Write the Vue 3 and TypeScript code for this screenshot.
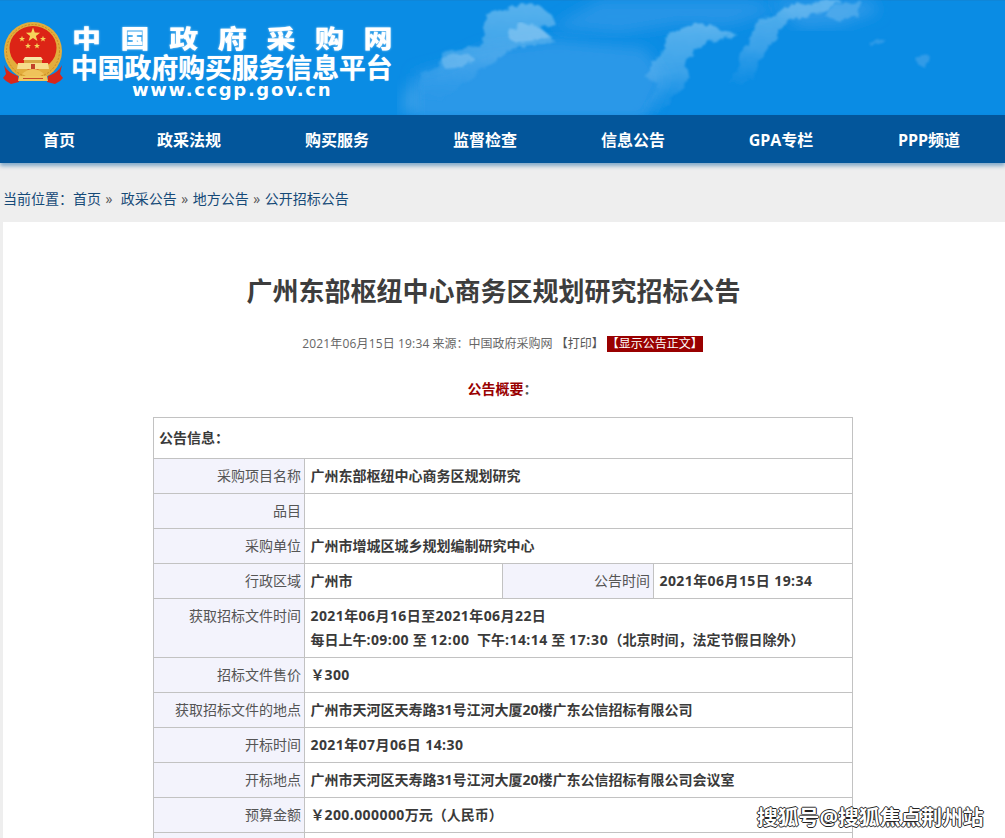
<script setup lang="ts">
const navItems = ['首页', '政采法规', '购买服务', '监督检查', '信息公告', 'GPA专栏', 'PPP频道']
const stars = [
  { x: 33, y: 20, r: 7.5 },
  { x: 22, y: 24, r: 3.2 },
  { x: 28, y: 31, r: 3.2 },
  { x: 37, y: 31, r: 3.2 },
  { x: 43, y: 24, r: 3.2 },
]
const starPoints = (cx: number, cy: number, r: number) => {
  const pts: string[] = []
  for (let i = 0; i < 10; i++) {
    const rad = i % 2 === 0 ? r : r * 0.4
    const a = -Math.PI / 2 + (i * Math.PI) / 5
    pts.push(`${(cx + rad * Math.cos(a)).toFixed(1)},${(cy + rad * Math.sin(a)).toFixed(1)}`)
  }
  return pts.join(' ')
}
</script>

<template>
  <div class="page">
    <header class="banner">
      <div class="logo">
        <svg class="emblem" viewBox="0 0 70 72" width="70" height="72">
          <circle cx="33" cy="36" r="29" fill="#e2ad3c" />
          <circle cx="33" cy="36" r="26.5" fill="none" stroke="#c78a22" stroke-width="1" stroke-dasharray="2 1.5" />
          <ellipse cx="33" cy="33" rx="23.5" ry="22" fill="#dc2416" />
          <polygon v-for="s in stars" :key="s.x" :points="starPoints(s.x, s.y, s.r)" fill="#f6d45a" />
          <path d="M25 42l-2 3h20l-2-3z" fill="#f8e7a8" />
          <path d="M24 45h18v3h-18z" fill="#d9a743" />
          <path d="M18 48h30l1 6h-32z" fill="#f6dd8c" />
          <rect x="31" y="49" width="4" height="5" fill="#c2402a" />
          <path d="M4 50c3 6 8 9 14 11l1 6-8 2-5-3-3-3 3-4z" fill="#d8261a" />
          <path d="M62 50c-3 6-8 9-14 11l-1 6 8 2 5-3 3-3-3-4z" fill="#d8261a" />
          <path d="M22 59c3-3 7-5 11-5s8 2 11 5l-4 2h-14z" fill="#efc35a" />
          <path d="M19 61h28l1 5h-30z" fill="#f0c85e" />
          <path d="M23 63.5h20" stroke="#c8492a" stroke-width="1" />
        </svg>
        <div class="logo-text">
          <div class="logo-main">中国政府采购网</div>
          <div class="logo-sub">中国政府购买服务信息平台</div>
          <div class="logo-url">www.ccgp.gov.cn</div>
        </div>
      </div>
      <svg class="clouds" viewBox="0 0 585 115" width="585" height="115">
        <defs>
          <filter id="soft" x="-10%" y="-10%" width="120%" height="120%">
            <feTurbulence type="fractalNoise" baseFrequency="0.11" numOctaves="3" seed="7" />
            <feDisplacementMap in="SourceGraphic" scale="7" />
            <feGaussianBlur stdDeviation="1.1" />
          </filter>
          <filter id="wide"><feGaussianBlur stdDeviation="7" /></filter>
          <linearGradient id="fade" x1="0" y1="0" x2="0" y2="1">
            <stop offset="0" stop-color="#8ccbf3" stop-opacity="0.6" />
            <stop offset="0.55" stop-color="#63b4ee" stop-opacity="0.55" />
            <stop offset="1" stop-color="#2c98e8" stop-opacity="0.15" />
          </linearGradient>
        </defs>
        <!-- 云层底色 -->
        <path d="M-5 120V74l30-8 40-18 70-8 90 8 20 30-20 42z" fill="#2b98e8" filter="url(#wide)" />
        <path d="M130 28l50-28h150l30 10-50 16-50-2-60 10z" fill="#2595e7" filter="url(#wide)" />
        <path d="M350 0h100l10 12-40 14-40 2z" fill="#2c98e8" filter="url(#wide)" />
        <path d="M-20 115l4-25 12-10 6 30z" fill="#4ea8ea" opacity="0.6" filter="url(#wide)" />
        <!-- 云峰 -->
        <path d="M0 100V73l14-2 8-11-2-8 20-3 7-3 13 1 5-12-2-10 7-11 15-4 15-7 18 2 14 10 4 10-16 2 10 11 7 5-37 3-10 4-15 12-15 10-40 28z" fill="url(#fade)" filter="url(#soft)" />
        <path d="M88 38l2-8 12-6 16 3 14 10-20 4-16 1z" fill="#a8d6f6" opacity="0.45" filter="url(#soft)" />
        <path d="M24 68l-2-10 14-4 12 0 8 6-14 6z" fill="#a8d6f6" opacity="0.35" filter="url(#soft)" />
        <path d="M222 112l10-17 8-10-14-7 6-16 12-12 1-12 13-8 12-5 20-1 10 6 18 5-33 7-5 8-15 10 3 15-6 15-12 10-8 12z" fill="url(#fade)" filter="url(#soft)" />
        <path d="M308 85l12-20-2-10 10-10 2-15 15-12 10-3 10-8 20-2 23-5h12l-10 10-15 5-25 5-10 10-10 15-10 15-7 20z" fill="url(#fade)" filter="url(#soft)" />
        <path d="M405 16l14-14h24l-6 14-18 5z" fill="#6db9ef" opacity="0.5" filter="url(#soft)" />
        <path d="M448 42l18-3-4 3-12 3z M495 58l14-3-3 14-8-4z" fill="#4ba6ea" opacity="0.6" filter="url(#soft)" />
      </svg>
    </header>

    <nav class="nav">
      <a v-for="item in navItems" :key="item" class="nav-item">{{ item }}</a>
    </nav>

    <div class="crumb">
      当前位置：首页 <span class="gt">»</span>&nbsp; 政采公告 <span class="gt">»</span> 地方公告 <span class="gt">»</span> 公开招标公告
    </div>

    <main class="card">
      <h2 class="title">广州东部枢纽中心商务区规划研究招标公告</h2>
      <p class="meta">
        <span class="date">2021年06月15日 19:34</span> 来源：中国政府采购网 <span class="print">【打印】</span>
        <span class="show">【显示公告正文】</span>
      </p>
      <p class="summary"><b>公告概要</b><i>：</i></p>

      <table class="info">
        <colgroup>
          <col class="c1" />
          <col class="c2" />
          <col class="c3" />
          <col class="c4" />
        </colgroup>
        <tbody>
          <tr class="head"><td colspan="4">公告信息：</td></tr>
          <tr><th>采购项目名称</th><td colspan="3">广州东部枢纽中心商务区规划研究</td></tr>
          <tr><th>品目</th><td colspan="3"></td></tr>
          <tr><th>采购单位</th><td colspan="3">广州市增城区城乡规划编制研究中心</td></tr>
          <tr><th>行政区域</th><td>广州市</td><th>公告时间</th><td class="num">2021年06月15日 19:34</td></tr>
          <tr class="tall">
            <th>获取招标文件时间</th>
            <td colspan="3"><span class="num">2021年06月16日至2021年06月22日</span><br />每日上午<span class="num">:09:00</span> 至 <span class="wide">12:00</span>&nbsp; 下午<span class="num">:14:14</span> 至 <span class="wide">17:30</span>（北京时间，法定节假日除外）</td>
          </tr>
          <tr><th>招标文件售价</th><td colspan="3">￥<span class="num">300</span></td></tr>
          <tr><th>获取招标文件的地点</th><td colspan="3">广州市天河区天寿路31号江河大厦20楼广东公信招标有限公司</td></tr>
          <tr><th>开标时间</th><td colspan="3" class="num">2021年07月06日 14:30</td></tr>
          <tr><th>开标地点</th><td colspan="3">广州市天河区天寿路31号江河大厦20楼广东公信招标有限公司会议室</td></tr>
          <tr><th>预算金额</th><td colspan="3">￥<span class="num">200.000000</span>万元（人民币）</td></tr>
          <tr><th></th><td colspan="3"></td></tr>
        </tbody>
      </table>
    </main>

    <div class="watermark">搜狐号@搜狐焦点荆州站</div>
  </div>
</template>

<style>
html,
body {
  margin: 0;
  background: #eeeeee;
  overflow: hidden;
}
</style>

<style scoped>
.page {
  position: relative;
  width: 1005px;
  height: 838px;
  overflow: hidden;
  background: #eeeeee;
  font-family: "Open Sans", "Liberation Sans", "Noto Sans CJK SC", sans-serif;
  color: #333;
}
/* 顶部 */
.banner {
  position: relative;
  height: 115px;
  display: flex;
  justify-content: space-between;
  background: #0a8ce4;
  border-top: 1px solid #0f86d8;
  box-sizing: border-box;
}
.logo {
  display: flex;
  align-items: flex-start;
  padding-top: 14px;
}
.logo-text {
  width: 320px;
  margin-left: 2px;
  margin-top: 7px;
  color: #fff;
  font-family: "Noto Sans CJK SC", sans-serif;
  font-weight: 900;
  white-space: nowrap;
}
.logo-main {
  font-size: 25px;
  line-height: 31px;
  letter-spacing: 16.9px;
  transform: scaleX(1.16);
  transform-origin: left center;
  text-shadow: 0 0 2px #bfe3fb;
}
.logo-sub {
  font-size: 26.8px;
  line-height: 28px;
  font-weight: 700;
  margin-left: -1px;
  text-shadow: 0 0 1px #bfe3fb;
}
.logo-url {
  font-family: "DejaVu Sans", sans-serif;
  font-weight: 700;
  font-size: 18px;
  line-height: 24px;
  letter-spacing: 1.65px;
  margin-left: 60px;
  margin-top: -3px;
}
.clouds {
  display: block;
  margin-top: -1px;
  overflow: visible;
}
/* 导航 */
.nav {
  height: 48px;
  display: flex;
  background: #03569b;
  box-shadow: 0 3px 4px rgba(3, 86, 155, 0.45);
  position: relative;
}
.nav-item {
  flex: none;
  width: 148px;
  text-align: center;
  color: #fff;
  font-size: 16px;
  font-weight: 700;
  line-height: 50px;
}
.nav-item:first-child {
  width: 115px;
  padding-left: 3px;
  box-sizing: border-box;
}
/* 面包屑 */
.crumb {
  height: 59px;
  box-sizing: border-box;
  padding: 26px 0 0 3px;
  font-size: 14px;
  line-height: 19px;
  color: #164a78;
}
.gt {
  color: #555;
  margin: 0 0.9px;
}
/* 内容 */
.card {
  margin-left: 3px;
  background: #fff;
  height: 640px;
  padding-top: 52px;
  box-sizing: border-box;
}
.title {
  margin: 0;
  text-align: center;
  font-size: 26px;
  line-height: 34px;
  font-weight: 700;
  color: #3d3d3d;
  padding-right: 21px;
}
.meta {
  margin: 28px 0 0;
  text-align: center;
  font-size: 12px;
  line-height: 16px;
  color: #666;
  padding-right: 3px;
}
.date {
  letter-spacing: 0.15px;
}
.print {
  color: #555;
}
.show {
  display: inline-block;
  background: #990000;
  color: #fff;
  margin-left: 3px;
  line-height: 16px;
}
.summary {
  margin: 27px 0 0;
  text-align: center;
  font-size: 14px;
  line-height: 20px;
  padding-right: 3px;
}
.summary b {
  color: #990000;
}
.summary i {
  font-style: normal;
  font-weight: 700;
  color: #555;
}
.info {
  width: 699px;
  margin: 18px 0 0 150px;
  border-collapse: collapse;
  table-layout: fixed;
  font-size: 14px;
  color: #333;
}
.c1 { width: 151px; }
.c2 { width: 198px; }
.c3 { width: 151px; }
.c4 { width: 199px; }
.info td,
.info th {
  border: 1px solid #c2c2c2;
  height: 35px;
  padding: 0 3px 0 5.5px;
  box-sizing: border-box;
  line-height: 24px;
  white-space: nowrap;
  overflow: hidden;
}
.info th {
  background: #f3f3fc;
  font-weight: 400;
  text-align: right;
  color: #555;
}
.info td {
  font-weight: 700;
  text-align: left;
  color: #3a3a3a;
}
.info .num {
  letter-spacing: 0.42px;
}
.info .wide {
  letter-spacing: 0.7px;
}
.info .head td {
  height: 41px;
  padding-left: 5px;
}
.info .tall td,
.info .tall th {
  height: 59px;
}
.info .tall th {
  vertical-align: top;
  padding-top: 5px;
}
/* 水印 */
.watermark {
  position: absolute;
  left: 757px;
  top: 804px;
  font-size: 20.8px;
  line-height: 26px;
  font-weight: 700;
  color: #fff;
  white-space: nowrap;
  text-shadow: 1px 0 0 #222, -1px 0 0 #222, 0 1px 0 #222, 0 -1px 0 #222;
}
</style>
